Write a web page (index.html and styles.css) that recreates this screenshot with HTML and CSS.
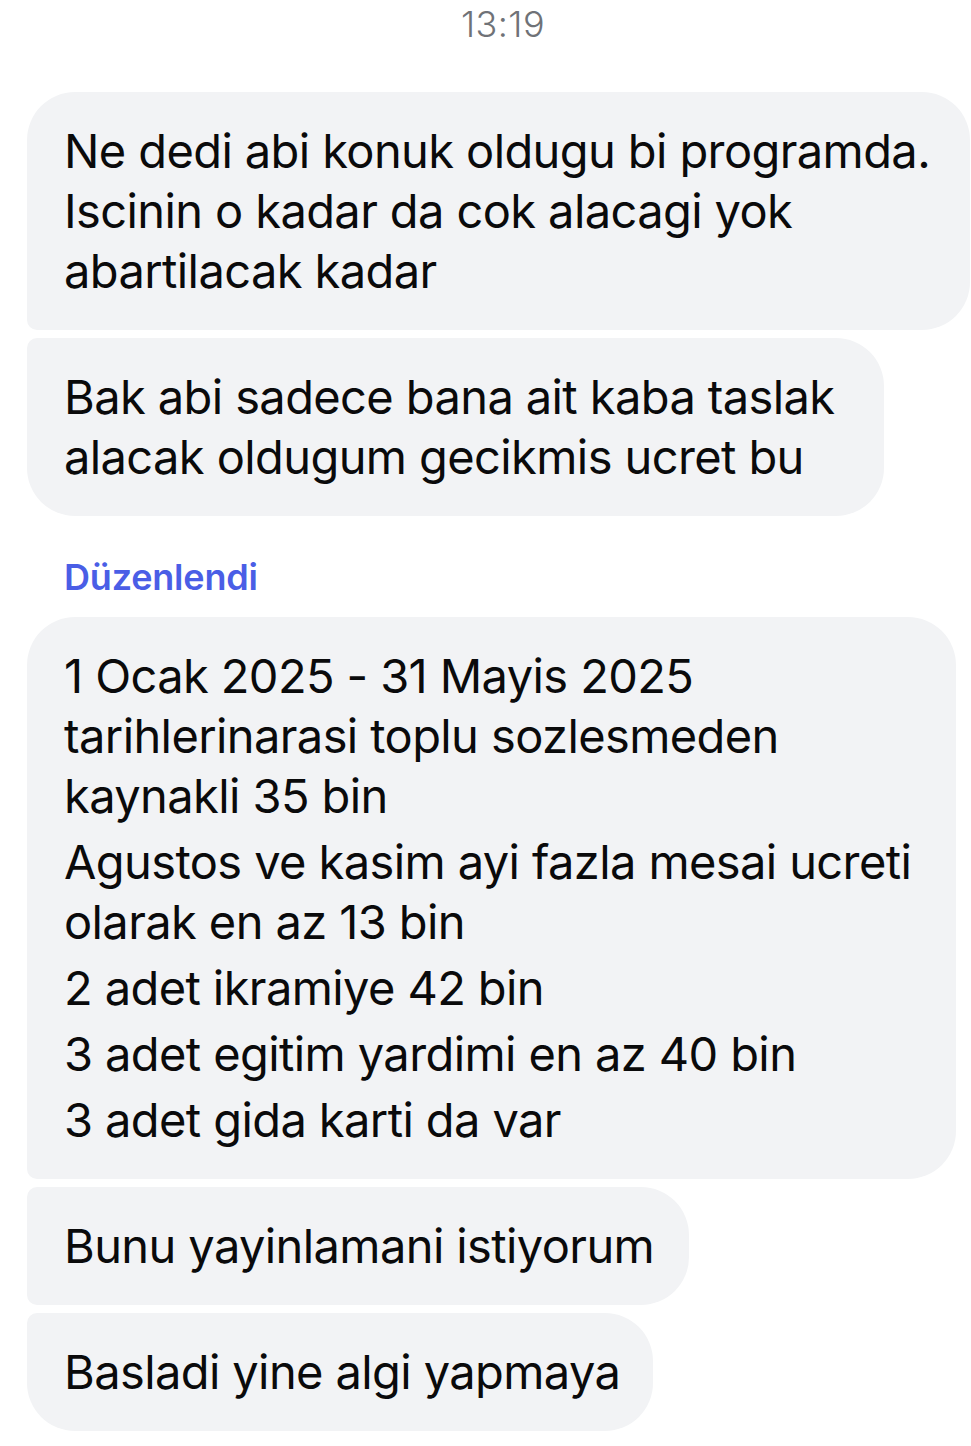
FILE: index.html
```html
<!DOCTYPE html>
<html lang="tr">
<head>
<meta charset="utf-8">
<title>Mesajlar</title>
<link rel="stylesheet" href="styles.css">
</head>
<body>
<main class="chat">
  <div class="time">13:19</div>
  <div class="bubble b1 first">
    <p class="para"><span class="ln">Ne dedi abi konuk oldugu bi programda.</span></p>
    <p class="para"><span class="ln">Iscinin o kadar da cok alacagi yok</span><span class="ln">abartilacak kadar</span></p>
  </div>
  <div class="bubble b2 last">
    <p class="para"><span class="ln">Bak abi sadece bana ait kaba taslak</span><span class="ln">alacak oldugum gecikmis ucret bu</span></p>
  </div>
  <div class="edited">Düzenlendi</div>
  <div class="bubble b3 first">
    <p class="para"><span class="ln">1 Ocak 2025 - 31 Mayis 2025</span><span class="ln">tarihlerinarasi toplu sozlesmeden</span><span class="ln">kaynakli 35 bin</span></p>
    <p class="para gap"><span class="ln">Agustos ve kasim ayi fazla mesai ucreti</span><span class="ln">olarak en az 13 bin</span></p>
    <p class="para gap"><span class="ln">2 adet ikramiye 42 bin</span></p>
    <p class="para gap"><span class="ln">3 adet egitim yardimi en az 40 bin</span></p>
    <p class="para gap"><span class="ln">3 adet gida karti da var</span></p>
  </div>
  <div class="bubble b4 middle">
    <p class="para"><span class="ln">Bunu yayinlamani istiyorum</span></p>
  </div>
  <div class="bubble b5 last">
    <p class="para"><span class="ln">Basladi yine algi yapmaya</span></p>
  </div>
</main>
</body>
</html>
```
FILE: styles.css
```css
* { box-sizing: border-box; }
html, body {
  margin: 0;
  padding: 0;
  background: #ffffff;
}
body {
  font-family: Inter, "Noto Sans", "Liberation Sans", sans-serif;
  color: #0a0a0b;
  width: 971px;
  overflow: hidden;
}
.chat {
  display: flex;
  flex-direction: column;
  align-items: flex-start;
  gap: 8px;
  padding-bottom: 20px;
}
.time {
  align-self: center;
  height: 48px;
  line-height: 48px;
  font-size: 36px;
  font-weight: 300;
  color: #6f7277;
  margin-left: 35px;
  margin-bottom: 36px;
  letter-spacing: 0.4px;
}
.bubble {
  margin-left: 27px;
  background: #f2f3f5;
  padding: 29px 30px 29px 37px;
  border-radius: 48px;
}
.bubble.first { border-bottom-left-radius: 10px; }
.bubble.middle { border-top-left-radius: 10px; border-bottom-left-radius: 10px; }
.bubble.last { border-top-left-radius: 10px; }
.b1 { width: 943px; }
.b2 { width: 857px; }
.b3 { width: 929px; }
.b4 { width: 662px; }
.b5 { width: 626px; }
.para {
  margin: 0;
  font-size: 47px;
  line-height: 60px;
  letter-spacing: -0.6px;
}
.para.gap { margin-top: 6px; }
.ln {
  display: block;
  white-space: nowrap;
}
.edited {
  margin-left: 64px;
  margin-top: 32px;
  margin-bottom: 11px;
  height: 42px;
  line-height: 42px;
  font-size: 36px;
  font-weight: 600;
  color: #4a5ee6;
  letter-spacing: -0.2px;
}
```
